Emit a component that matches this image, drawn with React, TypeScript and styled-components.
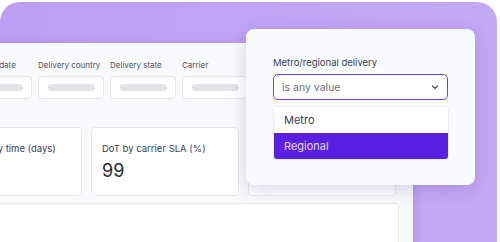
import React from 'react'
import styled, { createGlobalStyle } from 'styled-components'

const GlobalStyle = createGlobalStyle`
  html, body {
    margin: 0;
    padding: 0;
    background: #ffffff;
  }
  body {
    font-family: Inter, "Noto Sans", sans-serif;
    -webkit-font-smoothing: antialiased;
  }
`

const filters = ['Delivery date', 'Delivery country', 'Delivery state', 'Carrier']
const metrics = [
  { title: 'Avg. delivery time (days)', value: '' },
  { title: 'DoT by carrier SLA (%)', value: '99' },
  { title: '', value: '' },
]
const options = ['Metro', 'Regional']

const Stage = styled.div`
  position: relative;
  width: 500px;
  height: 242px;
  overflow: hidden;
  background: #ffffff;
`
const Backdrop = styled.div`
  margin: 2px 3px 0 0;
  height: 258px;
  border-radius: 20px;
  padding-top: 41px;
  box-sizing: border-box;
  overflow: hidden;
  background: linear-gradient(90deg, #bb9ff1 0%, #c4a9f5 100%);
`
const Dashboard = styled.div`
  margin-left: -76px;
  width: 489px;
  height: 230px;
  background: #f8f9fa;
  border-top-right-radius: 6px;
  box-shadow: 2px 0 8px rgba(80, 40, 160, 0.15);
`
const FilterRow = styled.div`
  display: flex;
  gap: 6px;
  padding: 16px 0 0 42px;
`
const Filter = styled.div`
  display: flex;
  flex-direction: column;
  gap: 5px;
  width: 66px;
  flex-shrink: 0;
`
const FilterLabel = styled.div`
  font-size: 8px;
  line-height: 12px;
  color: #4b5563;
  white-space: nowrap;
`
const FilterBox = styled.div`
  height: 23px;
  box-sizing: border-box;
  border: 1px solid #e5e7eb;
  border-radius: 4px;
  background: #ffffff;
  display: flex;
  align-items: center;
  justify-content: center;
`
const Skeleton = styled.div`
  width: 47px;
  height: 7px;
  border-radius: 4px;
  background: #e2e4e8;
`
const CardRow = styled.div`
  display: flex;
  gap: 9px;
  padding: 28px 0 0 10px;
`
const Card = styled.div`
  width: 148px;
  height: 69px;
  flex-shrink: 0;
  box-sizing: border-box;
  padding: 14px 10px 0;
  border: 1px solid #e7e8eb;
  border-radius: 4px;
  background: #ffffff;
`
const CardTitle = styled.div`
  font-size: 9.5px;
  line-height: 13px;
  color: #374151;
  white-space: nowrap;
`
const CardValue = styled.div`
  margin-top: 5px;
  font-size: 18px;
  line-height: 22px;
  color: #1f2937;
`
const Table = styled.div`
  margin-top: 7px;
  width: 473px;
  height: 60px;
  border: 1px solid #e7e8eb;
  border-radius: 4px;
  background: #ffffff;
`
const Popup = styled.div`
  position: absolute;
  left: 246px;
  top: 29px;
  width: 229px;
  height: 156px;
  box-sizing: border-box;
  padding: 27px 27px 0;
  border-radius: 8px;
  background: #f9fafb;
  box-shadow: 0 4px 18px rgba(60, 30, 120, 0.18);
`
const PopupLabel = styled.div`
  font-size: 9.5px;
  line-height: 14px;
  color: #374151;
`
const Select = styled.div`
  margin-top: 4px;
  height: 26px;
  width: 175px;
  box-sizing: border-box;
  padding: 0 8px;
  border: 1.5px solid #6d3fe6;
  border-radius: 5px;
  background: #ffffff;
  display: flex;
  align-items: center;
  justify-content: space-between;
  font-size: 10.5px;
  color: #6b7280;
`
const List = styled.div`
  margin-top: 6px;
  width: 174px;
  border: 1px solid #eceef1;
  border-radius: 4px;
  overflow: hidden;
  background: #ffffff;
`
const Option = styled.div<{ $active?: boolean }>`
  height: 26px;
  padding: 0 10px;
  display: flex;
  align-items: center;
  font-size: 11px;
  color: ${(p) => (p.$active ? '#e6dcff' : '#374151')};
  background: ${(p) => (p.$active ? '#5b1fe4' : '#ffffff')};
`

const Chevron = () => (
  <svg width="8" height="8" viewBox="0 0 8 8" fill="none">
    <path d="M1.5 3L4 5.5L6.5 3" stroke="#4b5563" strokeWidth="1.2" strokeLinecap="round" strokeLinejoin="round" />
  </svg>
)

export default function App() {
  return (
    <Stage>
      <GlobalStyle />
      <Backdrop>
        <Dashboard>
          <FilterRow>
            {filters.map((f) => (
              <Filter key={f}>
                <FilterLabel>{f}</FilterLabel>
                <FilterBox>
                  <Skeleton />
                </FilterBox>
              </Filter>
            ))}
          </FilterRow>
          <CardRow>
            {metrics.map((m, i) => (
              <Card key={i}>
                {m.title && <CardTitle>{m.title}</CardTitle>}
                {m.value && <CardValue>{m.value}</CardValue>}
              </Card>
            ))}
          </CardRow>
          <Table />
        </Dashboard>
      </Backdrop>
      <Popup>
        <PopupLabel>Metro/regional delivery</PopupLabel>
        <Select>
          <span>is any value</span>
          <Chevron />
        </Select>
        <List>
          {options.map((o) => (
            <Option key={o} $active={o === 'Regional'}>{o}</Option>
          ))}
        </List>
      </Popup>
    </Stage>
  )
}
